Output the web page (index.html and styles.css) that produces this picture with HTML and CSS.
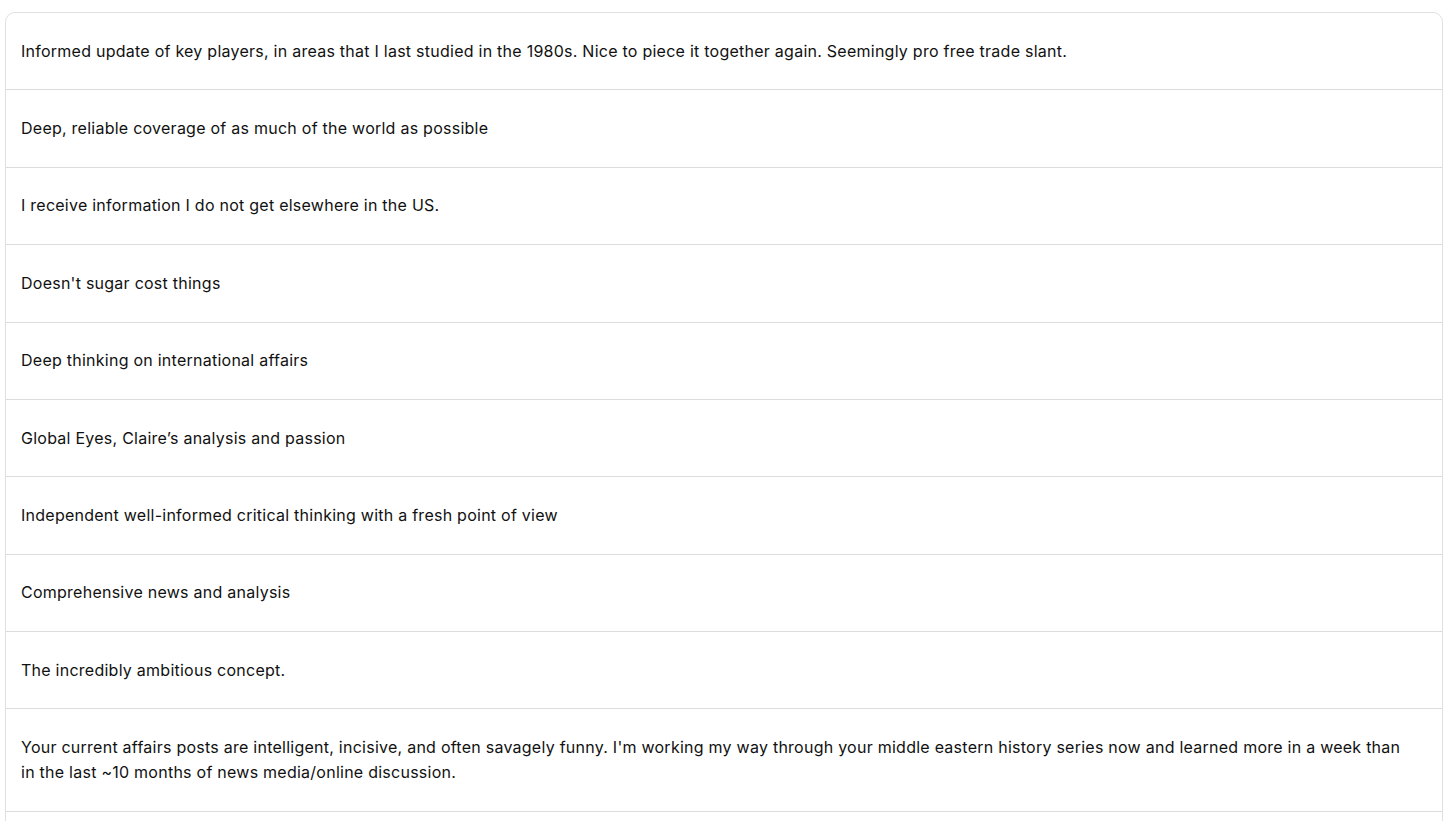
FILE: index.html
```html
<!DOCTYPE html>
<html>
<head>
<meta charset="utf-8">
<link rel="stylesheet" href="styles.css">
</head>
<body>
<div class="list">
  <div class="row">Informed update of key players, in areas that I last studied in the 1980s. Nice to piece it together again. Seemingly pro free trade slant.</div>
  <div class="row">Deep, reliable coverage of as much of the world as possible</div>
  <div class="row">I receive information I do not get elsewhere in the US.</div>
  <div class="row">Doesn't sugar cost things</div>
  <div class="row">Deep thinking on international affairs</div>
  <div class="row">Global Eyes, Claire’s analysis and passion</div>
  <div class="row">Independent well-informed critical thinking with a fresh point of view</div>
  <div class="row">Comprehensive news and analysis</div>
  <div class="row">The incredibly ambitious concept.</div>
  <div class="row">Your current affairs posts are intelligent, incisive, and often savagely funny. I'm working my way through your middle eastern history series now and learned more in a week than in the last ~10 months of news media/online discussion.</div>
  <div class="row">Thoughtful, well-researched writing</div>
</div>
</body>
</html>
```

FILE: styles.css
```css
html, body {
  margin: 0;
  padding: 0;
  background: #fff;
  overflow: hidden;
}
body {
  padding: 12px 13px 0 5px;
  font-family: Inter, "Noto Sans", sans-serif;
  font-size: 16px;
  letter-spacing: 0.25px;
  color: #111;
}
.list {
  border: 1.5px solid #e0e0e0;
  border-radius: 10px;
  overflow: hidden;
}
.row {
  padding: 25.7px 30px 25.7px 15px;
  line-height: 25px;
  border-top: 1px solid #dcdcdc;
}
.row:first-child {
  border-top: none;
}
```
